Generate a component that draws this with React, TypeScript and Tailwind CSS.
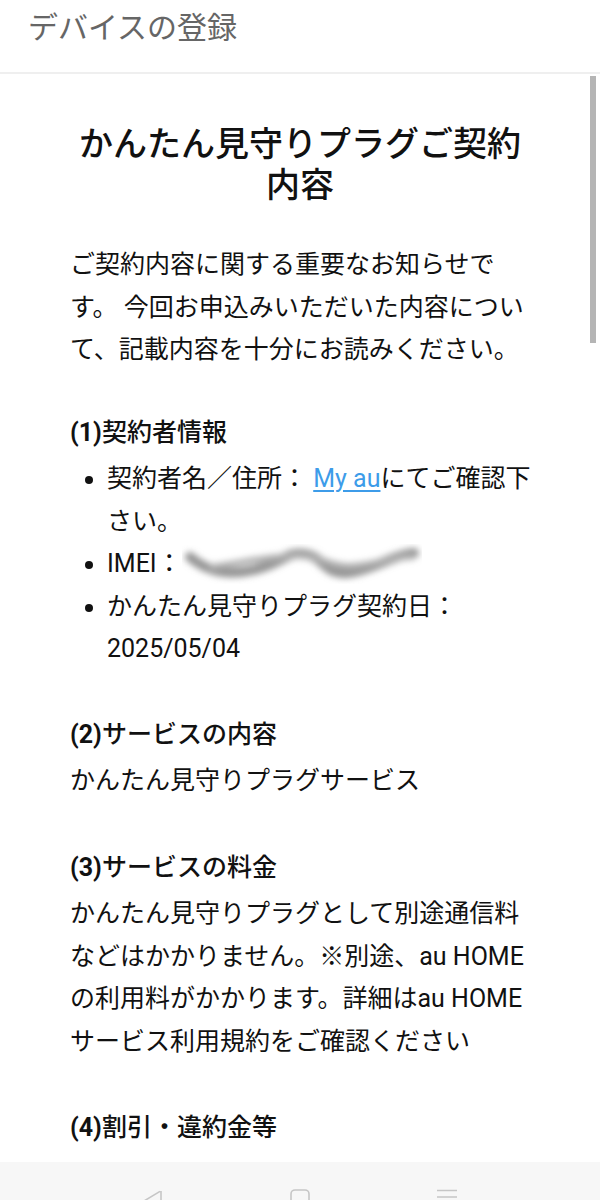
const font = "font-['Roboto','Noto_Sans_CJK_JP',sans-serif]"

function Scribble() {
  return (
    <svg width="240" height="40" viewBox="0 0 240 40" className="inline-block align-middle -mt-[2px]">
      <defs>
        <filter id="blur" x="-10%" y="-50%" width="120%" height="200%">
          <feGaussianBlur stdDeviation="3" />
        </filter>
      </defs>
      <g filter="url(#blur)" fill="none" strokeLinecap="round">
        <path d="M8 13 C 22 25, 42 33, 72 26 S 102 8, 122 10 S 142 31, 165 29 S 210 11, 232 9" stroke="#959595" strokeWidth="10" />
        <path d="M30 23 C 60 19, 90 11, 118 12 S 150 26, 180 21 S 215 12, 230 13" stroke="#b0b0b0" strokeWidth="6" />
      </g>
    </svg>
  )
}

function Heading({ num, children }: { num: string; children: React.ReactNode }) {
  return (
    <h3 className="font-medium mb-[4px]">
      <span className="font-bold">({num})</span>
      {children}
    </h3>
  )
}

export default function App() {
  return (
    <div className={`${font} h-[1200px] w-[600px] flex flex-col bg-white text-[#111] overflow-hidden`}>
      <header className="h-[74px] shrink-0 border-b-2 border-[#efefef] pl-[28px] pt-[10px]">
        <h1 className="text-[30px] leading-[36px] text-[#666]">デバイスの登録</h1>
      </header>

      <main className="relative flex-1 overflow-hidden">
        <div className="absolute right-[4px] top-[2px] w-[6px] h-[267px] bg-[#b5b5b5]" />

        <div className="pl-[70px] pr-[64px] pt-[50px] text-[25px] leading-[42.5px]">
          <h2 className="text-center mr-[6px] text-[34px] leading-[41px] font-medium">
            かんたん見守りプラグご契約内容
          </h2>

          <p className="mt-[38px]">
            ご契約内容に関する重要なお知らせです。 今回お申込みいただいた内容について、記載内容を十分にお読みください。
          </p>

          <section className="mt-[40px]">
            <Heading num="1">契約者情報</Heading>
            <ul className="list-disc pl-[37px]">
              <li>
                契約者名／住所：{' '}
                <a href="#" className="text-[#3d9ce9] underline underline-offset-[3px]">My au</a>
                にてご確認下さい。
              </li>
              <li>
                IMEI：<Scribble />
              </li>
              <li>かんたん見守りプラグ契約日：2025/05/04</li>
            </ul>
          </section>

          <section className="mt-[43px]">
            <Heading num="2">サービスの内容</Heading>
            <p>かんたん見守りプラグサービス</p>
          </section>

          <section className="mt-[44px]">
            <Heading num="3">サービスの料金</Heading>
            <p>
              かんたん見守りプラグとして別途通信料などはかかりません。※別途、au HOMEの利用料がかかります。詳細はau HOMEサービス利用規約をご確認ください
            </p>
          </section>

          <section className="mt-[44px]">
            <Heading num="4">割引・違約金等</Heading>
          </section>
        </div>
      </main>

      <nav className="h-[38px] shrink-0 bg-[#f7f7f7] flex justify-center gap-[125px] pt-[27px] overflow-hidden">
        <svg width="22" height="24" viewBox="0 0 22 24" fill="none" stroke="#c6c6c6" strokeWidth="1.6" strokeLinejoin="round">
          <path d="M19 2 L19 22 L2 12 L18 2.4" />
        </svg>
        <svg width="22" height="24" viewBox="0 0 22 24" fill="none" stroke="#c6c6c6" strokeWidth="1.6">
          <rect x="2" y="1" width="18" height="18" rx="4" />
        </svg>
        <svg width="22" height="24" viewBox="0 0 22 24" fill="none" stroke="#c6c6c6" strokeWidth="1.6">
          <path d="M1 1.5 H21 M1 8 H21 M1 14.5 H21" />
        </svg>
      </nav>
    </div>
  )
}
